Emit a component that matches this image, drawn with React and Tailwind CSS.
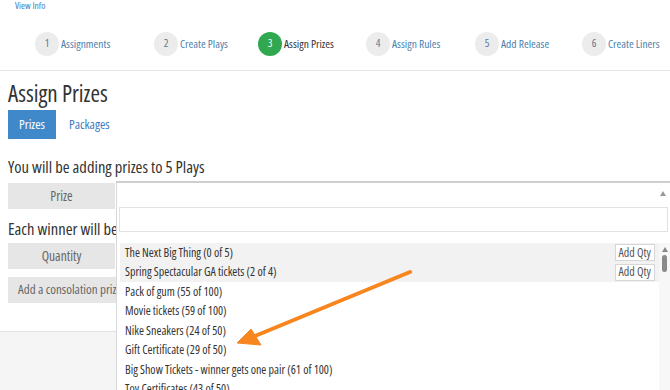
import React from 'react';

const steps = [
  { n: 1, label: 'Assignments', w: 'w-[119px]' },
  { n: 2, label: 'Create Plays', w: 'w-[104px]' },
  { n: 3, label: 'Assign Prizes', w: 'w-[108px]', active: true },
  { n: 4, label: 'Assign Rules', w: 'w-[109px]' },
  { n: 5, label: 'Add Release', w: 'w-[107px]' },
  { n: 6, label: 'Create Liners', w: 'w-[80px]' },
];

const prizes = [
  { name: 'The Next Big Thing (0 of 5)', qty: true },
  { name: 'Spring Spectacular GA tickets (2 of 4)', qty: true },
  { name: 'Pack of gum (55 of 100)' },
  { name: 'Movie tickets (59 of 100)' },
  { name: 'Nike Sneakers (24 of 50)' },
  { name: 'Gift Certificate (29 of 50)' },
  { name: 'Big Show Tickets - winner gets one pair (61 of 100)' },
  { name: 'Toy Certificates (43 of 50)' },
];

const Step = ({ step }) => (
  <div className={`${step.w} flex items-center gap-[2px] shrink-0 whitespace-nowrap`}>
    <div
      className={
        step.active
          ? 'w-[24px] h-[24px] rounded-full bg-[#2fa84f] text-white text-[11px] flex items-center justify-center'
          : 'w-[24px] h-[24px] rounded-full bg-[#ececec] text-[#5b7793] text-[11px] flex items-center justify-center'
      }
    >
      {step.n}
    </div>
    <span className={step.active ? 'text-[11.5px] text-[#333]' : 'text-[11.5px] text-[#4d7fae]'}>{step.label}</span>
  </div>
);

const LabelBox = ({ children }) => (
  <div className="w-[107px] h-[26px] bg-[#e6e6e6] flex items-center justify-center text-[13.5px] text-[#666]">
    {children}
  </div>
);

export default function App() {
  return (
    <div
      className="w-[670px] h-[390px] overflow-hidden relative bg-white flex flex-col font-stretch-[75%]"
      style={{ fontFamily: '"Open Sans", sans-serif' }}
    >
      <div className="h-[14px] shrink-0 pl-[15px] text-[9.5px] leading-[12px] text-[#3a7dbf]">View Info</div>

      {/* stepper */}
      <div className="h-[57px] shrink-0 flex items-center pl-[35px] pt-[3px] border-b border-[#e8e8e8]">
        {steps.map(s => <Step key={s.n} step={s} />)}
      </div>

      {/* main */}
      <div className="px-[8px] pt-[9px] h-[260px] shrink-0">
        <h1 className="text-[23px] leading-[26px] text-[#333]">Assign Prizes</h1>
        <div className="flex items-center mt-[4px] h-[29px]">
          <div className="w-[48px] h-[29px] bg-[#3f89cb] text-white text-[13px] flex items-center justify-center">Prizes</div>
          <div className="ml-[13px] text-[13px] text-[#3a7dbf]">Packages</div>
        </div>
        <p className="mt-[19px] text-[16.5px] leading-[18px] text-[#333]">You will be adding prizes to 5 Plays</p>
        <div className="mt-[7px]"><LabelBox>Prize</LabelBox></div>
        <p className="mt-[11px] text-[16.5px] leading-[18px] text-[#333]">Each winner will be awarded</p>
        <div className="mt-[5px]"><LabelBox>Quantity</LabelBox></div>
        <div className="mt-[8px] w-[200px] h-[26px] bg-[#e6e6e6] flex items-center pl-[10px] text-[13px] text-[#666]">
          Add a consolation prize
        </div>
      </div>

      {/* footer */}
      <div className="flex-1 bg-[#f5f5f5] border-t border-[#e2e2e2]" />

      {/* prize dropdown overlay */}
      <div className="absolute left-[116px] top-[181px] right-0 bottom-0 bg-white border-t-2 border-l border-t-[#cfcfcf] border-l-[#d8d8d8] flex flex-col">
        <div className="h-[24px] shrink-0 flex items-start justify-end pr-[4px] pt-[8px]">
          <svg width="6" height="5" viewBox="0 0 6 5"><path d="M3 0 L6 5 L0 5 Z" fill="#999" /></svg>
        </div>
        <div className="mx-[2px] h-[25px] shrink-0 border border-[#e2e2e2]" />
        <div className="mt-[11px] flex flex-1 overflow-hidden">
          <div className="flex-1 pl-[3px]">
            {prizes.map(p => (
              <div
                key={p.name}
                className={
                  p.qty
                    ? 'h-[19.5px] bg-[#f2f2f2] flex items-center justify-between pl-[5px] pr-[4px]'
                    : 'h-[19.5px] flex items-center pl-[5px]'
                }
              >
                <span className="text-[12px] leading-[16px] text-[#333] whitespace-nowrap">{p.name}</span>
                {p.qty && (
                  <span className="h-[17px] px-[3px] bg-white border border-[#d6d6d6] text-[12px] text-[#555] flex items-center">Add Qty</span>
                )}
              </div>
            ))}
          </div>
          <div className="w-[11px] bg-[#f7f7f7] flex flex-col items-center pt-[4px]">
            <svg width="6" height="5" viewBox="0 0 6 5"><path d="M3 0 L6 5 L0 5 Z" fill="#888" /></svg>
            <div className="mt-[3px] w-[5px] h-[17px] rounded-full bg-[#8a8a8a]" />
          </div>
        </div>
      </div>

      {/* annotation arrow */}
      <svg className="absolute left-0 top-0 pointer-events-none" width="670" height="390">
        <line x1="410" y1="272" x2="255" y2="336" stroke="#f7861f" strokeWidth="4" strokeLinecap="round" />
        <path d="M237 343 L251 329 L261 345 Z" fill="#f7861f" stroke="#f7861f" strokeWidth="1" strokeLinejoin="round" />
      </svg>
    </div>
  );
}
